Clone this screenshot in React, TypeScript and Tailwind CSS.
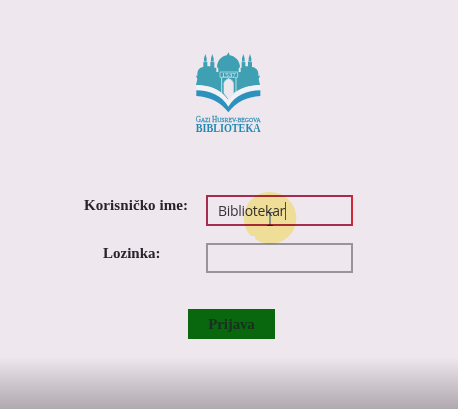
function Logo() {
  return (
    <svg viewBox="0 0 270 285" className="h-[95px] w-[90px]" role="img" aria-label="Gazi Husrev-begova biblioteka">
      <g fill="#3f9fb3">
        <path d="M131 22l3 9c17 3 30 16 31 34l-4 6v10h6V68h3V50h1V40l4-13 4 13v10h2v14h8V50h2V40l4-13 4 13v10h2v16c12 2 19 10 19 20v6h5l-4 10 4 18c-38 2-75 12-97 43-22-31-57-41-95-43l4-18-4-10h4v-6c0-11 6-18 17-20h1V50h2V40l4-13 4 13v10h2v14h9V50h2V40l4-13 4 13v10h2v18h6v13h6V71l-4-6c1-18 13-31 29-34z" />
      </g>
      <path d="M54 50h13M79 50h13M170 50h12M192 50h13" stroke="#eee8ee" strokeWidth="1.5" />
      <path d="M105 81h53v16h-53z" fill="#3f9fb3" stroke="#d8ecef" strokeWidth="2" />
      <text x="131.500" y="94.500" textAnchor="middle" textLength="42" lengthAdjust="spacingAndGlyphs" fontFamily="Liberation Serif, serif" fontSize="17" fill="#e2f1f3">1537</text>
      <path d="M110 98v46M153 98v46" stroke="#d8ecef" strokeWidth="2.500" />
      <path d="M116 144v-27q1-12 15-17q14 5 15 17v27l-15 20z" fill="#eee8ee" />
      <path d="M116 119v-3q1-10 15-15q14 5 15 15v3" stroke="#a5d0d8" strokeWidth="2" fill="none" />
      <path d="M34 120c40 0 78 14 96 48 19-34 57-48 96-48v17c-38 2-73 19-96 49-23-30-58-47-96-49z" fill="#f1f2f6" />
      <path d="M34 136c40 1 76 15 96 49 20-34 57-48 96-49v17c-39 2-73 18-96 49-23-31-57-47-96-49z" fill="#2d91bd" />
      <g fill="#3f94ba" stroke="#3f94ba" strokeWidth=".8" fontFamily="Liberation Serif, serif">
        <text x="32" y="230" fontSize="24" textLength="195" lengthAdjust="spacingAndGlyphs">
          G<tspan fontSize="19">AZI </tspan>H<tspan fontSize="19">USREV-BEGOVA</tspan>
        </text>
        <text x="32" y="260" fontSize="38" fontWeight="bold" textLength="195" lengthAdjust="spacingAndGlyphs" fill="#2488b4" stroke="none">BIBLIOTEKA</text>
      </g>
    </svg>
  );
}

function Pointer() {
  return (
    <div className="pointer-events-none absolute -top-[4px] left-[37px] mix-blend-multiply">
      <svg className="h-[54px] w-[54px]" viewBox="0 0 54 54">
        <path d="M27 1a26 26 0 1 1-15 47v-3H8A26 26 0 0 1 27 1z" fill="#fff4a2" />
        <path d="M24 21.5h2l1 1 1-1h2M27 22v12M24 34.5h6" fill="none" stroke="#536d8b" strokeWidth="1.2" />
      </svg>
    </div>
  );
}

export default function App() {
  return (
    <main className="flex h-[409px] w-[459px] flex-col border-r border-white bg-[#eee8ee] font-['Liberation_Serif',serif] text-[#28232b]">
      <div className="flex h-[195px] pt-[45px] pl-[185px]">
        <Logo />
      </div>
      <div className="flex h-12 items-start">
        <label htmlFor="user" className="w-[206px] pl-[84px] text-[15px] leading-5 font-bold tracking-[0.08px] whitespace-nowrap">Korisničko ime:</label>
        <div className="relative">
          <div id="user" className="flex h-[31px] w-[147px] items-center border-2 border-[#a62c4d] border-r-[#cf2935] pl-[10px] font-['Open_Sans',sans-serif] text-[14px] tracking-[-0.3px] text-[#38343c]">
            <span>Bibliotekar</span>
            <span className="h-[18px] w-px bg-[#56505a]" />
          </div>
          <Pointer />
        </div>
      </div>
      <div className="flex h-[66px] items-start">
        <label htmlFor="password" className="w-[206px] pl-[103px] text-[15px] leading-5 font-bold">Lozinka:</label>
        <input id="password" type="password" className="h-[30px] w-[147px] border-2 border-[#99949b] bg-transparent" />
      </div>
      <div className="flex h-[48px] pl-[188px]">
        <button className="h-[30px] w-[87px] bg-[#09680e] text-[15px] leading-5 font-bold tracking-[-0.15px] text-[#192f20]">Prijava</button>
      </div>
      <div className="flex-1 bg-linear-to-b from-[#eee8ee] via-[#cbc5cb] via-55% to-[#b0aab0]" />
    </main>
  );
}
